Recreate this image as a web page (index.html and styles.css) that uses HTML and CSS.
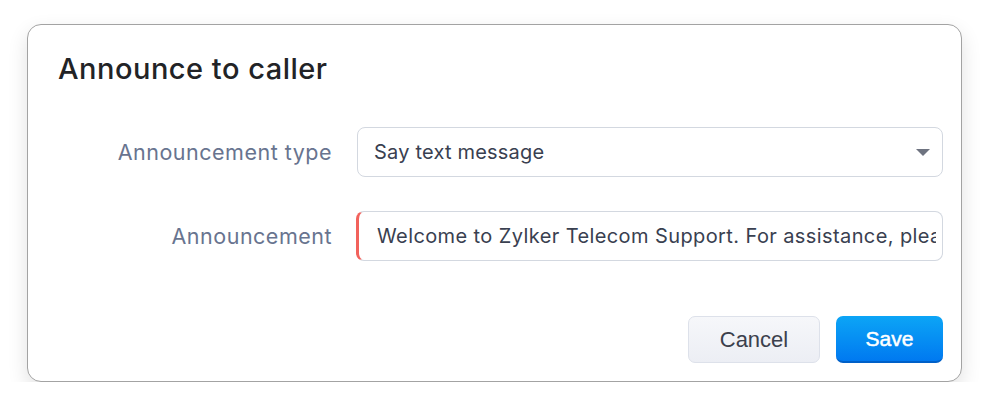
FILE: index.html
```html
<!DOCTYPE html>
<html lang="en">
<head>
    <meta charset="UTF-8">
    <meta name="viewport" content="width=device-width, initial-scale=1.0">
    <title>Announce to caller</title>
    <link rel="stylesheet" href="styles.css">
</head>
<body>
    <div class="dialog">
        <h1>Announce to caller</h1>
        <form class="form">
            <div class="row">
                <label for="type">Announcement type</label>
                <div class="select" id="type">
                    <span>Say text message</span>
                    <span class="caret"></span>
                </div>
            </div>
            <div class="row">
                <label for="msg">Announcement</label>
                <input type="text" id="msg" class="input invalid" value="Welcome to Zylker Telecom Support. For assistance, please stay on the line.">
            </div>
            <div class="actions">
                <button type="button" class="btn cancel">Cancel</button>
                <button type="submit" class="btn save">Save</button>
            </div>
        </form>
    </div>
</body>
</html>
```

FILE: styles.css
```css
body {
    margin: 0;
    background: #fff;
    font-family: Inter, "Noto Sans", sans-serif;
}
.dialog {
    box-sizing: border-box;
    width: 935px;
    height: 358px;
    margin: 24px 0 0 27px;
    padding: 26px 18px 0 30px;
    border: 1px solid #a3a3a3;
    border-radius: 14px;
    background: #fff;
    box-shadow: 0 8px 20px rgba(0, 0, 0, 0.12);
}
h1 {
    margin: 0;
    font-size: 29px;
    line-height: 36px;
    font-weight: 500;
    color: #222326;
    letter-spacing: 0.5px;
}
.form {
    margin-top: 40px;
}
.row {
    display: flex;
    align-items: center;
    margin-bottom: 34px;
}
label {
    width: 299px;
    flex: none;
    text-align: right;
    padding-right: 25px;
    box-sizing: border-box;
    font-size: 21.5px;
    letter-spacing: 0.5px;
    color: #68748f;
}
.select, .input {
    box-sizing: border-box;
    flex: 1;
    height: 50px;
    border: 1px solid #d3d8e0;
    border-radius: 8px;
    font-family: Inter, "Noto Sans", sans-serif;
    font-size: 20px;
    letter-spacing: 0.2px;
    color: #394050;
}
.select {
    display: flex;
    align-items: center;
    justify-content: space-between;
    padding: 0 12px 0 16px;
}
.caret {
    width: 0;
    height: 0;
    border-left: 7px solid transparent;
    border-right: 7px solid transparent;
    border-top: 7px solid #6e7380;
}
.input {
    padding: 0 6px 0 18px;
    outline: none;
    letter-spacing: 0.4px;
}
.invalid {
    border-left: 3px solid #f2625c;
    margin-left: -1px;
}
.actions {
    display: flex;
    justify-content: flex-end;
    gap: 16px;
    margin-top: 55px;
}
.btn {
    height: 47px;
    border-radius: 7px;
    font-family: "Liberation Sans", Arial, sans-serif;
    font-size: 22px;
    cursor: pointer;
}
.cancel {
    width: 132px;
    background: linear-gradient(#f6f7fa, #eceef4);
    border: 1px solid #dde1ea;
    color: #3b404c;
}
.save {
    width: 107px;
    background: linear-gradient(#0ca5f6, #0079f0);
    border: none;
    border-bottom: 2px solid #0060c8;
    color: #fff;
    font-size: 21px;
    -webkit-text-stroke: 0.5px #fff;
}
```
